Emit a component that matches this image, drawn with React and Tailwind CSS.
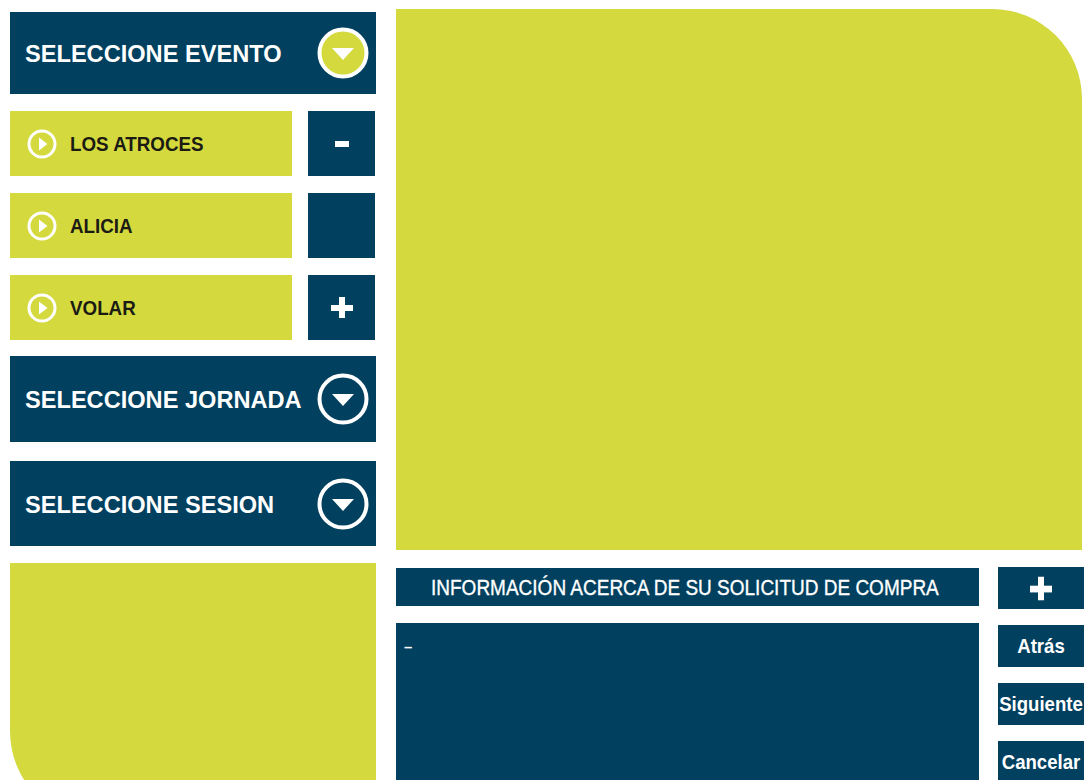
import React from "react";

const LIME = "bg-[#d4d93e]";
const NAVY = "bg-[#01405f]";

// Round chevron used on the section headers
const DropCircle = ({ filled }) => (
  <svg width="52" height="52" viewBox="0 0 52 52">
    <circle
      cx="26"
      cy="26"
      r="23.5"
      fill={filled ? "#d4d93e" : "none"}
      stroke="#fff"
      strokeWidth="4"
    />
    <polygon points="15,21 37,21 26,33" fill="#fff" />
  </svg>
);

const PlayCircle = () => (
  <svg width="30" height="30" viewBox="0 0 30 30">
    <circle cx="15" cy="15" r="13" fill="none" stroke="#fff" strokeWidth="3" />
    <polygon points="12,8.5 20.5,15 12,21.5" fill="#fff" />
  </svg>
);

const SectionHeader = ({ title, filled, className }) => (
  <div
    className={`${NAVY} shrink-0 flex items-center justify-between pl-[15px] pr-[7px] ${className}`}
  >
    <span className="text-white font-bold text-[23.6px] leading-none translate-y-[2px]">
      {title}
    </span>
    <DropCircle filled={filled} />
  </div>
);

const EventRow = ({ name, children }) => (
  <div className="flex gap-[16px] h-[65px] shrink-0">
    <div className={`${LIME} w-[282px] flex items-center pl-[17px] gap-[13px]`}>
      <PlayCircle />
      <span className="text-[#1b1b14] font-bold text-[18.8px] leading-none scale-y-[1.12] translate-y-[1px]">
        {name}
      </span>
    </div>
    <div className={`${NAVY} w-[67px] flex items-center justify-center`}>
      {children}
    </div>
  </div>
);

const Minus = () => <div className="w-[14px] h-[6px] bg-white" />;

const Plus = () => (
  <div className="relative w-[22px] h-[21px]">
    <div className="absolute left-0 top-[7.5px] w-[22px] h-[6px] bg-white" />
    <div className="absolute left-[8px] top-0 w-[6px] h-[21px] bg-white" />
  </div>
);

const SideButton = ({ children }) => (
  <div
    className={`${NAVY} h-[42px] shrink-0 flex items-center justify-center text-white font-bold text-[18.6px] leading-none whitespace-nowrap`}
  >
    <span className="scale-y-[1.12]">{children}</span>
  </div>
);

export default function App() {
  return (
    <div
      className="w-[1089px] h-[780px] overflow-hidden bg-white flex gap-[20px] pl-[10px]"
      style={{ fontFamily: '"Liberation Sans", Arial, sans-serif' }}
    >
      {/* Left column: selectors */}
      <div className="w-[366px] shrink-0 flex flex-col pt-[12px]">
        <SectionHeader title="SELECCIONE EVENTO" filled className="h-[82px]" />

        <div className="flex flex-col gap-[17px] mt-[17px] shrink-0">
          <EventRow name="LOS ATROCES">
            <Minus />
          </EventRow>
          <EventRow name="ALICIA" />
          <EventRow name="VOLAR">
            <Plus />
          </EventRow>
        </div>

        <SectionHeader title="SELECCIONE JORNADA" className="h-[86px] mt-[16px]" />
        <SectionHeader title="SELECCIONE SESION" className="h-[85px] mt-[19px]" />

        <div className={`${LIME} h-[260px] shrink-0 mt-[17px] rounded-bl-[92px]`} />
      </div>

      {/* Right column: stage + purchase info */}
      <div className="w-[688px] shrink-0 flex flex-col pt-[9px]">
        <div className={`${LIME} h-[541px] w-[686px] shrink-0 rounded-tr-[90px]`} />

        <div className="flex gap-[19px] mt-[17px] shrink-0">
          <div className="w-[583px] flex flex-col">
            <div
              className={`${NAVY} h-[38px] mt-[1px] shrink-0 flex items-center pl-[35px] text-white text-[19px] leading-none [-webkit-text-stroke:0.3px_white]`}
            >
              <span className="scale-y-[1.14]">
                INFORMACIÓN ACERCA DE SU SOLICITUD DE COMPRA
              </span>
            </div>
            <div className={`${NAVY} h-[200px] shrink-0 mt-[17px] pl-[8px] pt-[12px]`}>
              <span className="text-white font-bold text-[15px] leading-none">–</span>
            </div>
          </div>

          <div className="w-[86px] flex flex-col gap-[16px]">
            <SideButton>
              <Plus />
            </SideButton>
            <SideButton>Atrás</SideButton>
            <SideButton>Siguiente</SideButton>
            <SideButton>Cancelar</SideButton>
          </div>
        </div>
      </div>
    </div>
  );
}
